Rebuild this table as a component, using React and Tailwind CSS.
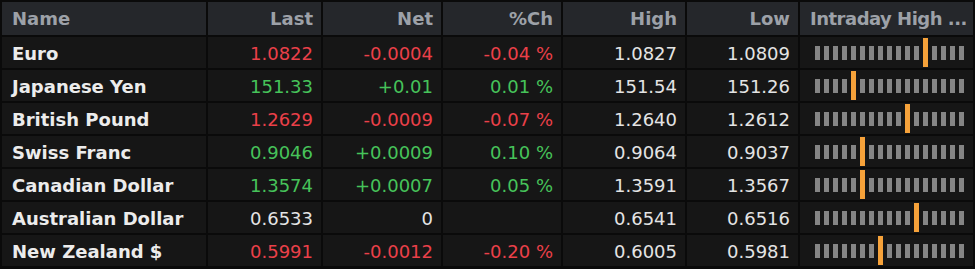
const rows = [
  { name: 'Euro', last: '1.0822', net: '-0.0004', pct: '-0.04 %', high: '1.0827', low: '1.0809', dir: 'down', pos: 12 },
  { name: 'Japanese Yen', last: '151.33', net: '+0.01', pct: '0.01 %', high: '151.54', low: '151.26', dir: 'up', pos: 4 },
  { name: 'British Pound', last: '1.2629', net: '-0.0009', pct: '-0.07 %', high: '1.2640', low: '1.2612', dir: 'down', pos: 10 },
  { name: 'Swiss Franc', last: '0.9046', net: '+0.0009', pct: '0.10 %', high: '0.9064', low: '0.9037', dir: 'up', pos: 5 },
  { name: 'Canadian Dollar', last: '1.3574', net: '+0.0007', pct: '0.05 %', high: '1.3591', low: '1.3567', dir: 'up', pos: 5 },
  { name: 'Australian Dollar', last: '0.6533', net: '0', pct: '', high: '0.6541', low: '0.6516', dir: 'flat', pos: 11 },
  { name: 'New Zealand $', last: '0.5991', net: '-0.0012', pct: '-0.20 %', high: '0.6005', low: '0.5981', dir: 'down', pos: 7 },
];

const tone = {
  up: 'text-[#46c35a]',
  down: 'text-[#ea4049]',
  flat: 'text-[#e4e4e4]',
};

const RangeBar = ({ pos }) => {
  const ticks = Array.from({ length: 16 }, (_, i) => i);
  return (
    <div className="flex items-center gap-[4px] h-full">
      {ticks.slice(0, pos).map((t) => (
        <span key={t} className="w-[5px] h-[14px] bg-[#858585]" />
      ))}
      <span className="w-[5px] h-[29px] bg-[#f6a23a]" />
      {ticks.slice(pos).map((t) => (
        <span key={t} className="w-[5px] h-[14px] bg-[#858585]" />
      ))}
    </div>
  );
};

const App = () => {
  const head = 'bg-[#25272b] text-[#9da1a8] font-bold flex items-center h-[33px]';
  const cell = 'bg-[#161616] flex items-center h-[31px]';

  return (
    <div
      className="w-[975px] h-[269px] bg-[#0a0a0a] pt-[2px] px-[2px] pb-[3px] overflow-hidden text-[18px] leading-none"
      style={{ fontFamily: '"DejaVu Sans", sans-serif' }}
    >
      <div className="grid grid-cols-[204px_113px_118px_118px_122px_111px_173px] gap-[2px]">
        {/* Header */}
        <div className={`${head} pl-[10px]`}>Name</div>
        <div className={`${head} justify-end pr-[8px]`}>Last</div>
        <div className={`${head} justify-end pr-[8px]`}>Net</div>
        <div className={`${head} justify-end pr-[8px]`}>%Ch</div>
        <div className={`${head} justify-end pr-[8px]`}>High</div>
        <div className={`${head} justify-end pr-[8px]`}>Low</div>
        <div className={`${head} pl-[10px] whitespace-nowrap tracking-[-0.5px] overflow-hidden`}>Intraday High ...</div>

        {/* Rows */}
        {rows.map((r) => (
          <div key={r.name} className="contents">
            <div className={`${cell} pl-[10px] pt-[2px] font-bold text-[#ececec] whitespace-nowrap`}>{r.name}</div>
            <div className={`${cell} justify-end pr-[8px] pt-[2px] ${tone[r.dir]}`}>{r.last}</div>
            <div className={`${cell} justify-end pr-[8px] pt-[2px] ${tone[r.dir]}`}>{r.net}</div>
            <div className={`${cell} justify-end pr-[8px] pt-[2px] ${tone[r.dir]}`}>{r.pct}</div>
            <div className={`${cell} justify-end pr-[8px] pt-[2px] text-[#e4e4e4]`}>{r.high}</div>
            <div className={`${cell} justify-end pr-[8px] pt-[2px] text-[#e4e4e4]`}>{r.low}</div>
            <div className={`${cell} pl-[15px]`}>
              <RangeBar pos={r.pos} />
            </div>
          </div>
        ))}
      </div>
    </div>
  );
};

export default App;
